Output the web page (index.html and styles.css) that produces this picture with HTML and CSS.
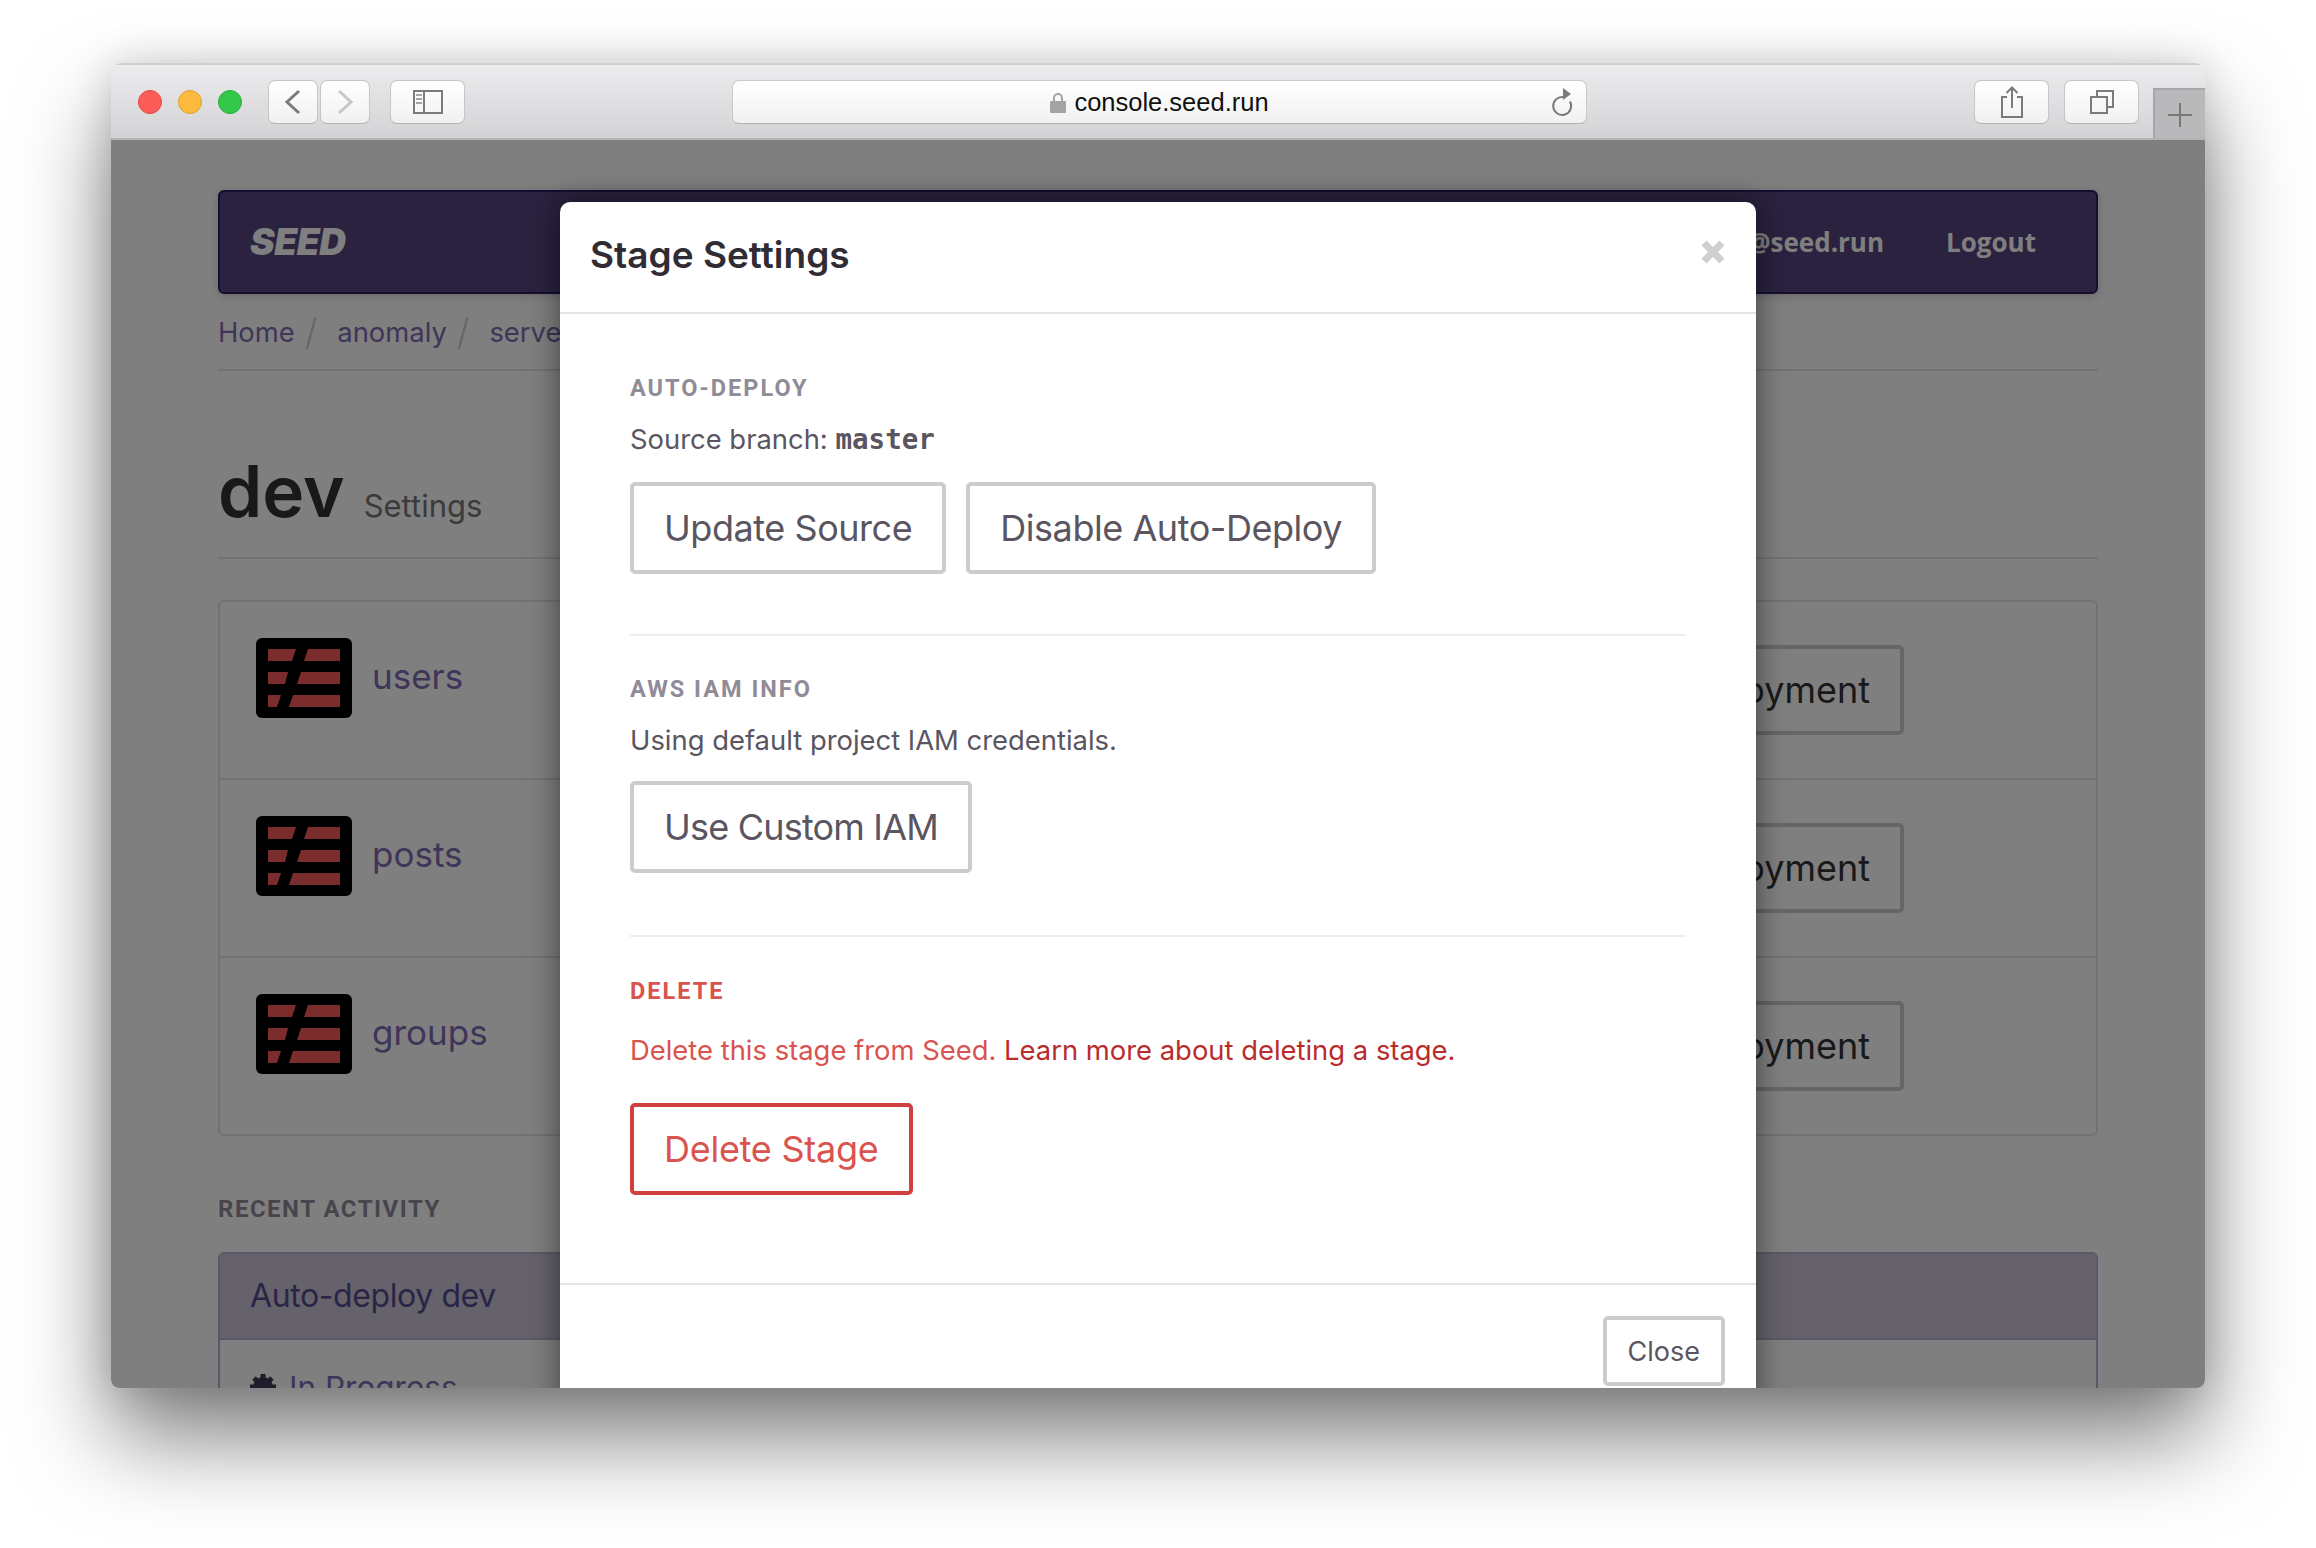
FILE: index.html
```html
<!DOCTYPE html>
<html lang="en">
<head>
    <meta charset="UTF-8">
    <title>Stage Settings</title>
    <link rel="stylesheet" href="styles.css">
</head>
<body>
    <svg class="defs" width="0" height="0">
        <symbol id="table-icon" viewBox="0 0 96 80">
            <rect width="96" height="80" rx="6" fill="#000"/>
            <path fill="#f45a58" d="M12 11H40L36 23H12ZM52 11H84V23H48ZM12 34H32L29 46H12ZM45 34H84V46H41ZM12 57H25L21 69H12ZM37 57H84V69H33Z"/>
        </symbol>
    </svg>

    <div class="window">
        <div class="toolbar">
            <div class="lights">
                <span class="light red"></span>
                <span class="light yellow"></span>
                <span class="light green"></span>
            </div>
            <div class="nav-btns">
                <div class="tool-btn small">
                    <svg width="22" height="26" viewBox="0 0 22 26"><path d="M17 2 5 13l12 11" fill="none" stroke="#7b7b7b" stroke-width="3"/></svg>
                </div>
                <div class="tool-btn small">
                    <svg width="22" height="26" viewBox="0 0 22 26"><path d="M5 2l12 11L5 24" fill="none" stroke="#c6c6c6" stroke-width="3"/></svg>
                </div>
            </div>
            <div class="tool-btn wide sidebar-btn">
                <svg width="32" height="26" viewBox="0 0 32 26"><path d="M2 2H30V24H2ZM12 2V24" fill="none" stroke="#7b7b7b" stroke-width="2"/><path d="M4 6H10M4 10H10M4 14H10" stroke="#a5a5a5" stroke-width="2"/></svg>
            </div>
            <div class="url-bar">
                <svg class="lock" width="16" height="22" viewBox="0 0 16 22"><path d="M4 9V6a4 4 0 0 1 8 0v3" fill="none" stroke="#a3a3a3" stroke-width="2"/><rect y="9" width="16" height="12" rx="1" fill="#a3a3a3"/></svg>
                <span class="url-text">console.seed.run</span>
                <svg class="reload" width="24" height="32" viewBox="0 0 24 32"><path d="M13 11A9 9 0 1 0 20 15.500" fill="none" stroke="#7b7b7b" stroke-width="2"/><path d="M13 2l8 6-8 6Z" fill="#7b7b7b"/></svg>
            </div>
            <div class="tool-btn wide">
                <svg width="24" height="32" viewBox="0 0 24 32"><path d="M7 11H2V31H22V11H17M12 22V2M6.500 7 12 1.500 17.500 7" fill="none" stroke="#7b7b7b" stroke-width="2"/></svg>
            </div>
            <div class="tool-btn wide tabs-btn">
                <svg width="26" height="26" viewBox="0 0 26 26"><path d="M2 8H18V24H2ZM8 8V2H24V18H18" fill="none" stroke="#7b7b7b" stroke-width="2"/></svg>
            </div>
            <div class="new-tab">
                <svg width="24" height="24" viewBox="0 0 24 24"><path d="M0 12H24M12 0V24" stroke="#777" stroke-width="2"/></svg>
            </div>
        </div>

        <div class="viewport">
            <div class="page">
                <div class="navbar">
                    <span class="brand">SEED</span>
                    <div class="nav-links">
                        <span>jay@seed.run</span>
                        <span>Logout</span>
                    </div>
                </div>

                <div class="breadcrumb">
                    <span>Home</span><i>/</i>
                    <span>anomaly</span><i>/</i>
                    <span>serverless</span>
                </div>

                <div class="page-title">
                    <h1>dev</h1>
                    <small>Settings</small>
                </div>

                <div class="service-list">
                    <div class="service-row">
                        <svg class="table-icon"><use href="#table-icon"/></svg>
                        <span class="service-name">users</span>
                        <span class="outline-btn">Latest Deployment</span>
                    </div>
                    <div class="service-row">
                        <svg class="table-icon"><use href="#table-icon"/></svg>
                        <span class="service-name">posts</span>
                        <span class="outline-btn">Latest Deployment</span>
                    </div>
                    <div class="service-row">
                        <svg class="table-icon"><use href="#table-icon"/></svg>
                        <span class="service-name">groups</span>
                        <span class="outline-btn">Latest Deployment</span>
                    </div>
                </div>

                <h4 class="recent-label">RECENT ACTIVITY</h4>
                <div class="activity-panel">
                    <div class="activity-head">Auto-deploy dev</div>
                    <div class="activity-body">
                        <svg width="26" height="26" viewBox="0 0 26 26"><circle cx="13" cy="13" r="7" fill="none" stroke="#3f3a58" stroke-width="6"/><path d="M13 0V26M0 13H26M4 4l18 18M22 4 4 22" stroke="#3f3a58" stroke-width="5"/></svg>
                        <span>In Progress</span>
                    </div>
                </div>
            </div>

            <div class="backdrop"></div>

            <div class="modal">
                <div class="modal-head">
                    <h2>Stage Settings</h2>
                    <svg class="modal-x" width="24" height="24" viewBox="0 0 24 24"><path d="M3 3 21 21M21 3 3 21" stroke="#cfcfcf" stroke-width="7"/></svg>
                </div>
                <div class="modal-body">
                    <div class="section">
                        <h4>AUTO-DEPLOY</h4>
                        <p>Source branch: <code>master</code></p>
                        <div class="btn-row">
                            <button class="btn">Update Source</button>
                            <button class="btn">Disable Auto-Deploy</button>
                        </div>
                    </div>
                    <div class="section">
                        <h4>AWS IAM INFO</h4>
                        <p>Using default project IAM credentials.</p>
                        <div class="btn-row">
                            <button class="btn btn-iam">Use Custom IAM</button>
                        </div>
                    </div>
                    <div class="section danger">
                        <h4>DELETE</h4>
                        <p>Delete this stage from Seed. <a href="#">Learn more about deleting a stage.</a></p>
                        <div class="btn-row">
                            <button class="btn btn-danger">Delete Stage</button>
                        </div>
                    </div>
                </div>
                <div class="modal-foot">
                    <button class="btn btn-small">Close</button>
                </div>
            </div>
        </div>
    </div>
</body>
</html>
```

FILE: styles.css
```css
* {
    box-sizing: border-box;
}

body {
    margin: 0;
    padding: 63px 111px 160px;
    background-color: #fff;
    font-family: 'Inter', 'Roboto', sans-serif;
}

.defs {
    display: block;
    height: 0;
}

.window {
    display: flex;
    flex-direction: column;
    height: 1325px;
    border-radius: 10px 10px 8px 8px;
    overflow: hidden;
    box-shadow: 0 50px 90px rgba(0, 0, 0, 0.5), 0 0 40px rgba(0, 0, 0, 0.15);
}

.toolbar {
    display: flex;
    align-items: center;
    flex: none;
    height: 77px;
    padding: 0 0 0 27px;
    position: relative;
    background: linear-gradient(#ecebed, #d3d2d5);
    border-top: 2px solid #cfcfcf;
    border-bottom: 2px solid #b4b4b4;
}

.lights {
    display: flex;
    gap: 16px;
}

.light {
    width: 24px;
    height: 24px;
    border-radius: 50%;
}

.red { background-color: #fc5d58; border: 1px solid #e2463f; }
.yellow { background-color: #fdbb3e; border: 1px solid #e09e2c; }
.green { background-color: #34c84a; border: 1px solid #2aac3a; }

.nav-btns {
    display: flex;
    gap: 2px;
    margin-left: 26px;
}

.tool-btn {
    display: flex;
    align-items: center;
    justify-content: center;
    height: 44px;
    background: linear-gradient(#fff, #f1f1f1);
    border: 1px solid #c6c6c8;
    border-bottom-color: #b4b4b6;
    border-radius: 7px;
}

.small { width: 50px; }
.wide { width: 75px; }

.sidebar-btn {
    margin-left: 20px;
}

.url-bar {
    display: flex;
    align-items: center;
    justify-content: center;
    gap: 8px;
    position: relative;
    width: 855px;
    height: 44px;
    margin: 0 387px 0 267px;
    padding-top: 2px;
    background: linear-gradient(#fff, #f1f1f1);
    border: 1px solid #c9c9cb;
    border-bottom-color: #b0b0b2;
    border-radius: 7px;
}

.url-text {
    font-family: 'Liberation Sans', sans-serif;
    font-size: 25.500px;
    color: #111;
}

.reload {
    position: absolute;
    right: 12px;
    top: 5px;
}

.tabs-btn {
    margin-left: 15px;
}

.new-tab {
    position: absolute;
    right: 0;
    bottom: 0;
    display: flex;
    align-items: center;
    justify-content: center;
    width: 52px;
    height: 50px;
    padding-top: 2px;
    background-color: #b9b8bb;
    border-top: 2px solid #a6a6a8;
    border-left: 2px solid #a6a6a8;
}

.viewport {
    flex: 1;
    position: relative;
    overflow: hidden;
    background-color: #fff;
}

.page {
    padding: 50px 107px 0;
}

.navbar {
    display: flex;
    align-items: center;
    justify-content: space-between;
    height: 104px;
    padding: 0 60px 0 30px;
    background-color: #54447f;
    border: 2px solid #2c1a66;
    border-radius: 6px;
    box-shadow: 0 2px 10px rgba(0, 0, 0, 0.2);
    color: #fff;
}

.brand {
    margin-bottom: 2px;
    font-size: 37px;
    font-weight: 900;
    font-style: italic;
    letter-spacing: -0.5px;
}

.nav-links {
    display: flex;
    gap: 62px;
    font-family: 'Open Sans', sans-serif;
    font-size: 26px;
    font-weight: 700;
}

.breadcrumb {
    display: flex;
    align-items: center;
    height: 77px;
    border-bottom: 2px solid #e5e5e5;
    font-size: 27.400px;
    color: #7e6ab0;
}

.breadcrumb i {
    margin: 0 20px 0 10px;
    font-size: 36px;
    font-style: normal;
    font-weight: 300;
    color: #ccc;
}

.page-title {
    display: flex;
    align-items: baseline;
    gap: 19px;
    height: 188px;
    padding-top: 75px;
    border-bottom: 2px solid #e5e5e5;
}

.page-title h1 {
    margin: 0;
    font-size: 71px;
    font-weight: 600;
    line-height: 90px;
    color: #333;
}

.page-title small {
    font-size: 31px;
    color: #777;
}

.service-list {
    margin-top: 41px;
    border: 2px solid #e5e5e5;
    border-radius: 6px;
}

.service-row {
    display: flex;
    align-items: flex-start;
    height: 178px;
    padding: 36px 192px 0 36px;
    border-bottom: 2px solid #e5e5e5;
}

.service-row:last-child {
    height: 176px;
    border-bottom: none;
}

.table-icon {
    width: 96px;
    height: 80px;
}

.service-name {
    flex: 1;
    margin-left: 20px;
    font-size: 35px;
    line-height: 76px;
    color: #7e6ab0;
}

.outline-btn {
    margin-top: 7px;
    padding: 0 30px;
    border: 4px solid #ccc;
    border-radius: 5px;
    font-size: 36px;
    line-height: 82px;
    color: #333;
}

.recent-label {
    margin: 56px 0 0;
    font-family: 'Roboto', sans-serif;
    font-size: 24px;
    font-weight: 700;
    letter-spacing: 1.500px;
    line-height: 34px;
    color: #8f8b97;
}

.activity-panel {
    margin-top: 26px;
    border: 2px solid #b8aed0;
    border-radius: 6px 6px 0 0;
}

.activity-head {
    height: 86px;
    padding-left: 30px;
    background-color: #cac4d6;
    border-bottom: 2px solid #b8aed0;
    font-size: 32px;
    letter-spacing: -0.400px;
    line-height: 84px;
    color: #544a8c;
}

.activity-body {
    display: flex;
    align-items: center;
    gap: 13px;
    height: 80px;
    padding: 14px 30px 0;
    font-size: 31.500px;
    color: #7e6ab0;
}

.backdrop {
    position: absolute;
    inset: 0;
    background-color: rgba(0, 0, 0, 0.5);
}

.modal {
    position: absolute;
    left: 449px;
    top: 62px;
    width: 1196px;
    background-color: #fff;
    border-radius: 10px 10px 0 0;
    box-shadow: 0 0 30px rgba(0, 0, 0, 0.5);
}

.modal-head {
    display: flex;
    align-items: center;
    justify-content: space-between;
    height: 112px;
    padding: 0 31px 5px 30px;
    border-bottom: 2px solid #e5e5e5;
}

.modal-head h2 {
    margin: 0;
    font-size: 37px;
    font-weight: 600;
    color: #2f2d33;
}

.modal-x {
    margin-bottom: 5px;
}

.modal-body {
    padding: 59px 70px 0;
}

.section {
    margin-bottom: 38px;
    padding-bottom: 60px;
    border-bottom: 2px solid #eee;
}

.section h4 {
    margin: 0 0 16px;
    font-family: 'Roboto', sans-serif;
    font-size: 23.500px;
    font-weight: 700;
    letter-spacing: 2px;
    line-height: 30px;
    color: #8f8b97;
}

.section p {
    margin: 0 0 23px;
    font-size: 27.400px;
    line-height: 40px;
    color: #5a5560;
}

.section code {
    font-family: 'DejaVu Sans Mono', monospace;
    font-size: 27.500px;
    font-weight: 700;
}

.section + .section {
    margin-bottom: 39px;
    padding-bottom: 62px;
}

.section + .section p {
    margin-bottom: 21px;
}

.btn-row {
    display: flex;
    gap: 20px;
}

.btn {
    height: 92px;
    padding: 0 30px;
    background-color: #fff;
    border: 4px solid #ccc;
    border-radius: 5px;
    font-family: inherit;
    font-size: 36px;
    letter-spacing: -0.450px;
    color: #5a5560;
}

.btn-iam {
    letter-spacing: -0.800px;
}

.btn-small {
    height: 70px;
    padding: 0 21px;
    font-size: 27px;
    letter-spacing: 0;
}

.section.danger {
    margin-bottom: 0;
    padding-bottom: 88px;
    border-bottom: none;
}

.section.danger h4 {
    margin-bottom: 24px;
    color: #d9534f;
}

.section.danger p {
    margin-bottom: 33px;
    color: #d9534f;
}

.danger a {
    color: #b92c2c;
    text-decoration: none;
}

.btn-danger {
    border-color: #d04040;
    letter-spacing: -0.250px;
    color: #d9534f;
}

.modal-foot {
    display: flex;
    justify-content: flex-end;
    padding: 31px 31px 40px;
    border-top: 2px solid #e5e5e5;
}
```
